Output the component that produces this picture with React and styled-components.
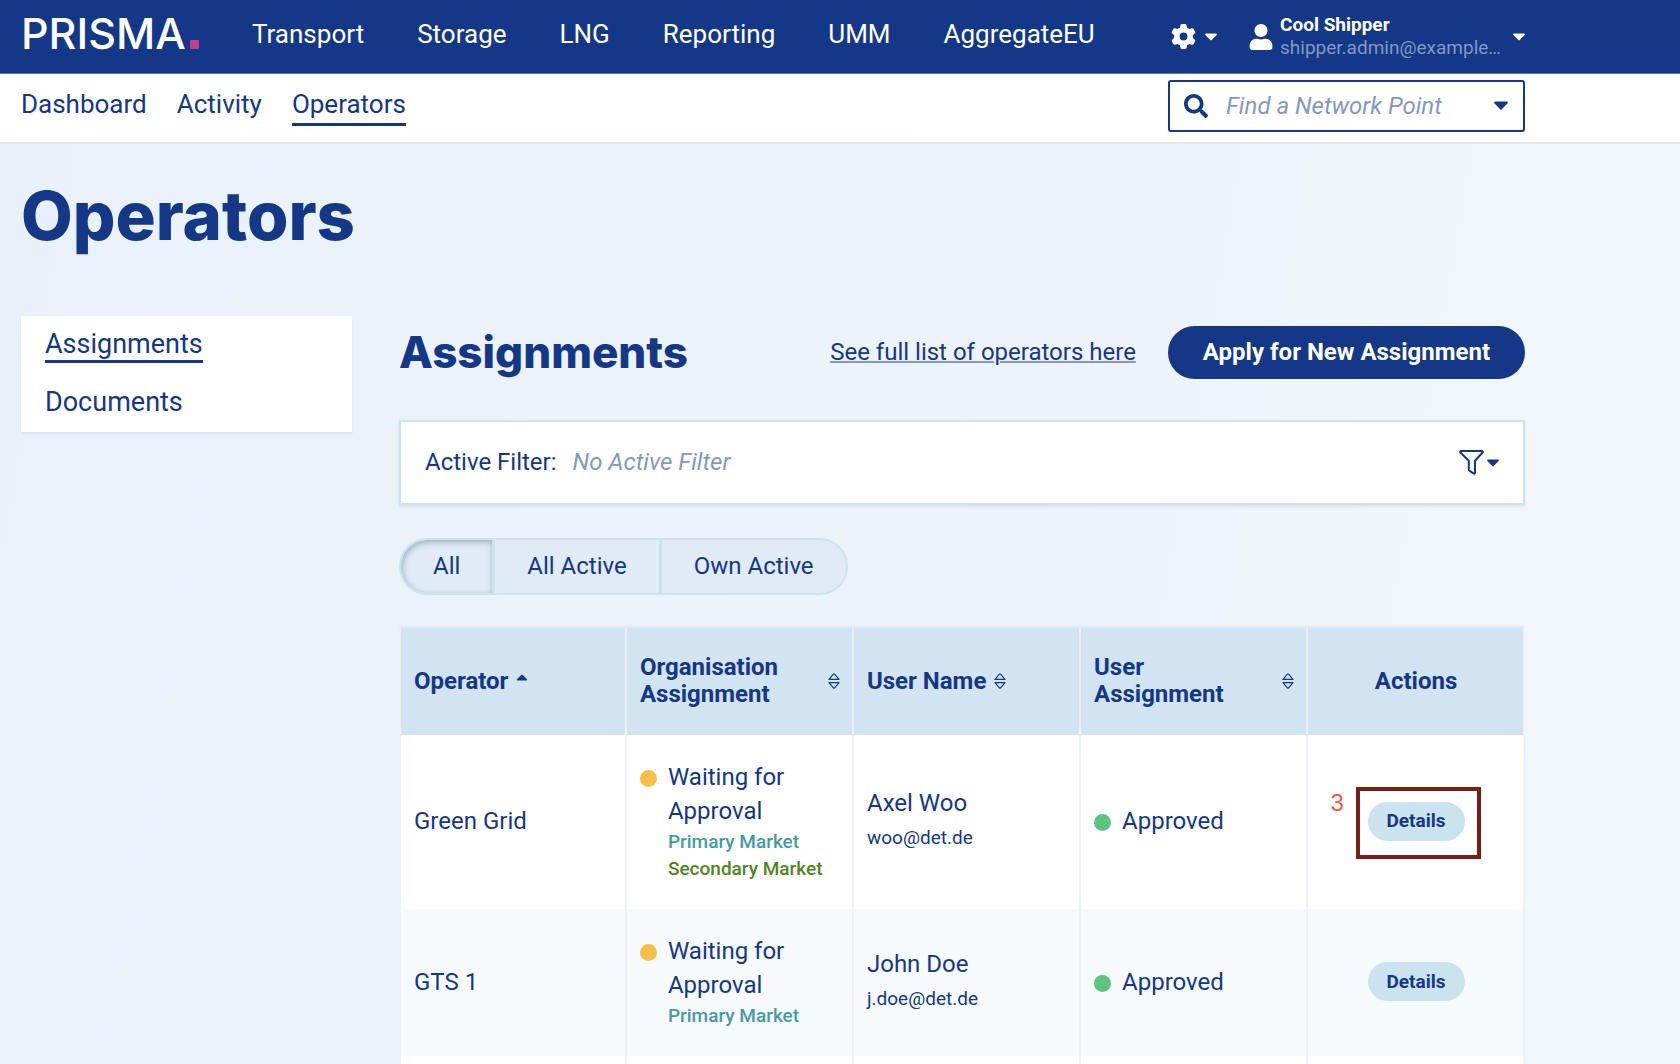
import React from 'react';
import styled, { createGlobalStyle, css } from 'styled-components';
import { FaSearch, FaUser } from 'react-icons/fa';
import { FaGear } from 'react-icons/fa6';

const colors = {
  blue: '#143787',
  muted: '#8399c3',
  pale: '#cbe3ef',
  head: '#d2e3f1',
  line: '#eaf1f9',
  pink: '#c13f86',
};

const GlobalStyle = createGlobalStyle`
  * {
    box-sizing: border-box;
  }
  body {
    margin: 0;
    background: #f1f6fa;
    color: ${colors.blue};
    font-family: Roboto, "Liberation Sans", sans-serif;
    font-size: 24px;
    line-height: 35px;
  }
  a {
    color: inherit;
    text-decoration: none;
  }
  button,
  input {
    font: inherit;
    color: inherit;
  }
  button {
    padding: 0;
    border: 0;
    background: none;
    cursor: pointer;
  }
`;

const Page = styled.div`
  min-height: 100vh;
  background: linear-gradient(100deg, #e8f1f9 0%, #eef3fb 66%, #f0f5fa 74%, #f2f7fb 100%);
`;

const Container = styled.div`
  max-width: 1546px;
  padding: 0 21px;
`;

const TopBar = styled.header`
  border-bottom: 1px solid #5f7bb1;
  background: ${colors.blue};
  color: white;
`;

const TopBarInner = styled(Container)`
  display: flex;
  align-items: center;
  height: 73px;
`;

const Logo = styled.a`
  display: flex;
  align-items: baseline;
  gap: 4px;
  width: 231px;
  padding-bottom: 8px;
  font-family: Inter, sans-serif;
  font-size: 43px;
  font-weight: 500;
  line-height: 50px;
`;

const LogoDot = styled.span`
  width: 9px;
  height: 9px;
  border-radius: 1px;
  background: ${colors.pink};
`;

const MainNav = styled.nav`
  display: flex;
  flex: 1;
  gap: 53px;
  padding-bottom: 5px;
  font-size: 26px;
`;

const IconButton = styled.button`
  display: flex;
  align-items: center;
  gap: ${({ $gap }) => $gap}px;
`;

const UserButton = styled(IconButton)`
  margin-left: 31px;
`;

const UserText = styled.span`
  display: flex;
  flex-direction: column;
  width: 222px;
  margin-right: 5px;
  padding-bottom: 2px;
  font-size: 19px;
  line-height: 23px;
  text-align: left;
  white-space: nowrap;
`;

const UserName = styled.strong`
  font-weight: 700;
`;

const UserMail = styled.span`
  color: ${colors.muted};
`;

const SubBar = styled.div`
  border-bottom: 2px solid #e5e8eb;
  background: white;
`;

const SubBarInner = styled(Container)`
  display: flex;
  align-items: center;
  justify-content: space-between;
  height: 68px;
  padding-bottom: 4px;
`;

const SubNav = styled.nav`
  display: flex;
  gap: 30px;
  padding-bottom: 2px;
  font-size: 26px;
  line-height: 38px;
`;

const activeLine = css`
  border-bottom: 3px solid ${({ $active }) => ($active ? colors.blue : 'transparent')};
`;

const SubLink = styled.a`
  ${activeLine}
`;

const SearchBox = styled.label`
  display: flex;
  align-items: center;
  width: 357px;
  height: 52px;
  padding: 0 15px 0 14px;
  border: 2px solid ${colors.blue};
  border-radius: 3px;
`;

const SearchInput = styled.input`
  flex: 1;
  min-width: 0;
  padding: 0;
  margin-left: 18px;
  border: 0;
  outline: 0;
  background: none;

  &::placeholder {
    color: ${colors.muted};
    font-style: italic;
    opacity: 1;
  }
`;

const PageTitle = styled.h1`
  margin: 0;
  padding: 30px 0 58px;
  font-family: Inter, sans-serif;
  font-size: 67px;
  font-weight: 800;
  line-height: 84px;
`;

const Columns = styled.div`
  display: flex;
  align-items: flex-start;
  gap: 47px;
`;

const SideMenu = styled.nav`
  display: flex;
  flex: none;
  flex-direction: column;
  align-items: flex-start;
  gap: 24px;
  width: 331px;
  padding: 13px 24px 11px;
  background: white;
  box-shadow: 0 2px 2px rgba(20, 55, 135, 0.08);
  font-size: 27px;
  line-height: 31px;
`;

const SideLink = styled.a`
  ${activeLine}
`;

const Main = styled.main`
  flex: 1;
  min-width: 0;
`;

const SectionHeader = styled.div`
  display: flex;
  align-items: center;
  gap: 32px;
  padding: 10px 0 41px;
`;

const SectionTitle = styled.h2`
  flex: 1;
  margin: 0;
  font-family: Inter, sans-serif;
  font-size: 44px;
  font-weight: 800;
  line-height: 53px;
`;

const TextLink = styled.a`
  text-decoration: underline;
  text-decoration-color: ${colors.muted};
  text-decoration-thickness: 2px;
`;

const PrimaryButton = styled.button`
  height: 53px;
  padding: 0 35px;
  border-radius: 27px;
  background: ${colors.blue};
  color: white;
  font-weight: 700;
`;

const FilterBar = styled.div`
  display: flex;
  align-items: center;
  gap: 16px;
  height: 85px;
  padding: 0 24px;
  border: 2px solid ${colors.pale};
  background: white;
  box-shadow: 0 2px 2px rgba(20, 55, 135, 0.08);
`;

const NoFilter = styled.em`
  flex: 1;
  color: ${colors.muted};
`;

const Segments = styled.div`
  display: flex;
  margin: 33px 0 31px;
`;

const Segment = styled.button`
  height: 57px;
  padding: 0 32px;
  border: 2px solid ${colors.pale};
  background: #e1ebf6;

  & + & {
    margin-left: -1px;
  }
  &:first-child {
    border-radius: 29px 0 0 29px;
  }
  &:last-child {
    border-radius: 0 29px 29px 0;
  }
  ${({ $active }) =>
    $active &&
    css`
      box-shadow: inset 1px 2px 6px rgba(30, 50, 80, 0.35);
    `}
`;

const Table = styled.table`
  width: 100%;
  border-top: 2px solid #dcebf4;
  border-right: 2px solid ${colors.line};
  border-spacing: 0;
  table-layout: fixed;
`;

const Th = styled.th`
  width: ${({ $width }) => $width || 'auto'};
  height: 107px;
  padding: 0 12px 1px 13px;
  border-left: 2px solid ${colors.line};
  background: ${colors.head};
  font-weight: 700;
  line-height: 27px;
  text-align: ${({ $center }) => ($center ? 'center' : 'left')};
`;

const SortButton = styled.button`
  display: flex;
  align-items: center;
  justify-content: ${({ $spread }) => ($spread ? 'space-between' : 'flex-start')};
  gap: 8px;
  width: 100%;
  text-align: left;

  svg {
    flex: none;
  }
`;

const Row = styled.tr`
  background: white;

  &:nth-child(even) {
    background: #f6fafd;
  }
`;

const Td = styled.td`
  padding: 25px 12px 27px 13px;
  border-left: 2px solid ${colors.line};
  line-height: 34px;
`;

const TailCell = styled(Td)`
  height: 8px;
  padding: 0;
`;

const Status = styled.div`
  display: flex;
  gap: 11px;
`;

const Dot = styled.span`
  flex: none;
  width: 17px;
  height: 17px;
  margin-top: 10px;
  border-radius: 50%;
  background: ${({ $color }) => $color};
`;

const Market = styled.div`
  color: ${({ $color }) => $color};
  font-size: 19px;
  font-weight: 500;
  line-height: 27px;
  white-space: nowrap;
`;

const Mail = styled.div`
  font-size: 19px;
  line-height: 36px;
`;

const ActionWrap = styled.div`
  position: relative;
  width: fit-content;
  margin: 0 auto;
`;

const DetailsButton = styled.button`
  display: block;
  height: 39px;
  padding: 0 19px;
  border-radius: 20px;
  background: ${colors.pale};
  font-size: 19px;
  font-weight: 700;
`;

const Highlight = styled.span`
  position: absolute;
  top: -15px;
  left: -12px;
  width: 125px;
  height: 72px;
  border: 4px solid #7b1d10;
  pointer-events: none;
`;

const StepNumber = styled.span`
  position: absolute;
  top: -16px;
  left: -37px;
  color: #ee5a4a;
  font-family: "Liberation Sans", sans-serif;
`;

const Caret = ({ width = 12 }) => (
  <svg width={width} viewBox="0 0 12 8" fill="currentColor" aria-hidden="true">
    <path d="M1 .5h10c.8 0 1.1.8.6 1.4L6.7 7.1c-.4.4-1 .4-1.4 0L.4 1.900C-.1 1.300.2.5 1 .5z" />
  </svg>
);

const SortBoth = () => (
  <svg
    width="12"
    height="18"
    viewBox="0 0 12 18"
    fill="none"
    stroke="currentColor"
    strokeWidth="1.2"
    strokeLinejoin="round"
    aria-hidden="true"
  >
    <path d="M1 7.400 5.400 2.200q.6-.6 1.200 0L11 7.400zM1 10.600l4.400 5.200q.6.600 1.200 0L11 10.600z" />
  </svg>
);

const SortUp = () => (
  <svg width="12" height="18" viewBox="0 0 12 18" fill="currentColor" aria-hidden="true">
    <path d="M1.500 8.500h9c.7 0 1-.7.500-1.200L6.800 3c-.5-.5-1.100-.5-1.600 0L1 7.300c-.5.500-.2 1.200.5 1.200z" />
  </svg>
);

const FilterIcon = () => (
  <svg
    width="25"
    height="25"
    viewBox="0 0 25 25"
    fill="none"
    stroke="currentColor"
    strokeWidth="2"
    strokeLinejoin="round"
    aria-hidden="true"
  >
    <path d="M2 1h21c.8 0 1.200.9.600 1.500L16 10.800V22.500c0 1-.8 1.400-1.600.9l-4-2.800c-.4-.3-.6-.6-.6-1.100v-8.700L1.400 2.500C.8 1.900 1.200 1 2 1z" />
  </svg>
);

const topLinks = ['Transport', 'Storage', 'LNG', 'Reporting', 'UMM', 'AggregateEU'];
const subLinks = ['Dashboard', 'Activity', 'Operators'];
const filters = ['All', 'All Active', 'Own Active'];

const headings = [
  { label: 'Operator', icon: <SortUp />, width: '20.1%' },
  { label: 'Organisation Assignment', icon: <SortBoth />, width: '20.2%', spread: true },
  { label: 'User Name', icon: <SortBoth />, width: '20.2%' },
  { label: 'User Assignment', icon: <SortBoth />, width: '20.2%', spread: true },
];

const markets = {
  primary: { label: 'Primary Market', color: '#479aa5' },
  secondary: { label: 'Secondary Market', color: '#508523' },
};

const rows = [
  {
    operator: 'Green Grid',
    markets: ['primary', 'secondary'],
    user: 'Axel Woo',
    mail: 'woo@det.de',
    step: 3,
  },
  { operator: 'GTS 1', markets: ['primary'], user: 'John Doe', mail: 'j.doe@det.de' },
];

const Header = () => (
  <>
    <TopBar>
      <TopBarInner>
        <Logo href="#">
          PRISMA
          <LogoDot />
        </Logo>
        <MainNav>
          {topLinks.map((label) => (
            <a key={label} href="#">
              {label}
            </a>
          ))}
        </MainNav>
        <IconButton $gap={9} aria-label="Settings">
          <FaGear size={25} />
          <Caret />
        </IconButton>
        <UserButton $gap={6}>
          <FaUser size={26} />
          <UserText>
            <UserName>Cool Shipper</UserName>
            <UserMail>shipper.admin@example…</UserMail>
          </UserText>
          <Caret />
        </UserButton>
      </TopBarInner>
    </TopBar>
    <SubBar>
      <SubBarInner>
        <SubNav>
          {subLinks.map((label) => (
            <SubLink key={label} href="#" $active={label === 'Operators'}>
              {label}
            </SubLink>
          ))}
        </SubNav>
        <SearchBox>
          <FaSearch size={24} />
          <SearchInput placeholder="Find a Network Point" aria-label="Find a Network Point" />
          <Caret width={14} />
        </SearchBox>
      </SubBarInner>
    </SubBar>
  </>
);

const AssignmentsTable = () => (
  <Table>
    <thead>
      <tr>
        {headings.map(({ label, icon, width, spread }) => (
          <Th key={label} $width={width}>
            <SortButton $spread={spread}>
              {label}
              {icon}
            </SortButton>
          </Th>
        ))}
        <Th $center>Actions</Th>
      </tr>
    </thead>
    <tbody>
      {rows.map((row) => (
        <Row key={row.operator}>
          <Td>{row.operator}</Td>
          <Td>
            <Status>
              <Dot $color="#f5c04a" />
              <div>
                Waiting for Approval
                {row.markets.map((key) => (
                  <Market key={key} $color={markets[key].color}>
                    {markets[key].label}
                  </Market>
                ))}
              </div>
            </Status>
          </Td>
          <Td>
            {row.user}
            <Mail>{row.mail}</Mail>
          </Td>
          <Td>
            <Status>
              <Dot $color="#5cc480" />
              Approved
            </Status>
          </Td>
          <Td>
            <ActionWrap>
              <DetailsButton>Details</DetailsButton>
              {row.step && (
                <>
                  <StepNumber>{row.step}</StepNumber>
                  <Highlight />
                </>
              )}
            </ActionWrap>
          </Td>
        </Row>
      ))}
      <Row>
        <TailCell />
        <TailCell />
        <TailCell />
        <TailCell />
        <TailCell />
      </Row>
    </tbody>
  </Table>
);

const App = () => (
  <Page>
    <GlobalStyle />
    <Header />
    <Container>
      <PageTitle>Operators</PageTitle>
      <Columns>
        <SideMenu>
          <SideLink href="#" $active>
            Assignments
          </SideLink>
          <SideLink href="#">Documents</SideLink>
        </SideMenu>
        <Main>
          <SectionHeader>
            <SectionTitle>Assignments</SectionTitle>
            <TextLink href="#">See full list of operators here</TextLink>
            <PrimaryButton>Apply for New Assignment</PrimaryButton>
          </SectionHeader>
          <FilterBar>
            <span>Active Filter:</span>
            <NoFilter>No Active Filter</NoFilter>
            <IconButton $gap={3} aria-label="Filter">
              <FilterIcon />
              <Caret />
            </IconButton>
          </FilterBar>
          <Segments>
            {filters.map((label) => (
              <Segment key={label} $active={label === 'All'}>
                {label}
              </Segment>
            ))}
          </Segments>
          <AssignmentsTable />
        </Main>
      </Columns>
    </Container>
  </Page>
);

export default App;
